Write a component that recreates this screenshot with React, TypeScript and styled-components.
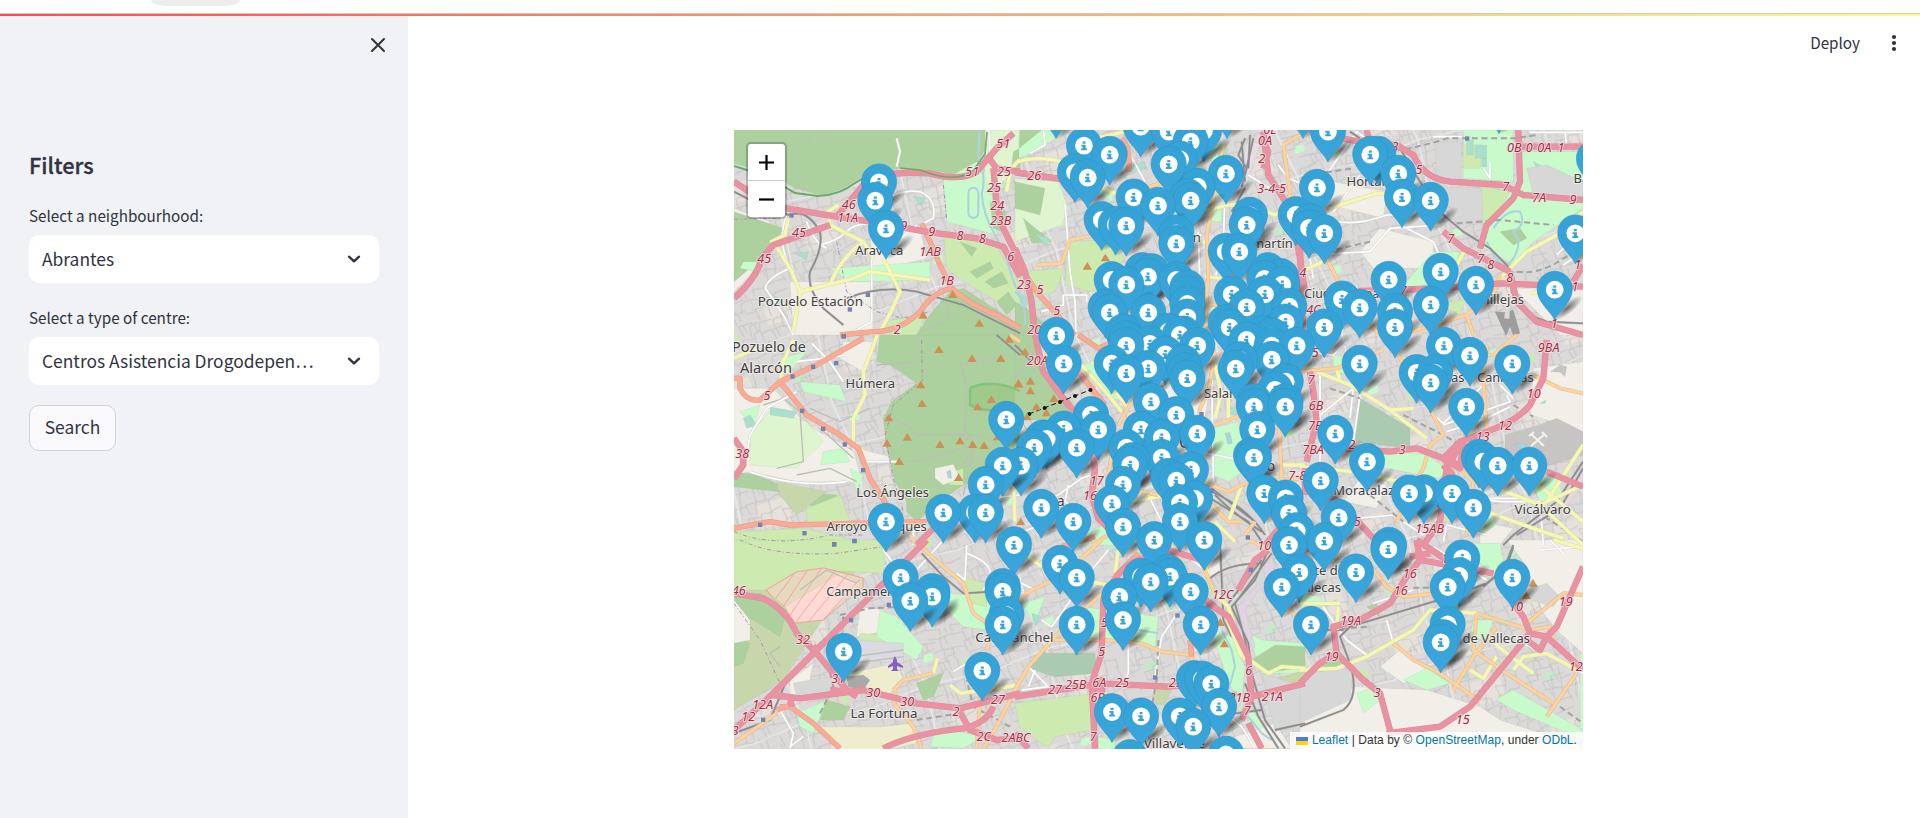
import React from 'react';
import styled, { createGlobalStyle } from 'styled-components';

const GlobalStyle = createGlobalStyle`
  * { box-sizing: border-box; }
  html, body { margin: 0; height: 100%; overflow: hidden; background: #fff; }
  body { font-family: "Noto Sans CJK SC", "Noto Sans", sans-serif; color: #31333f; }
`;

const Page = styled.div`
  height: 818px;
  display: flex;
  flex-direction: column;
`;
const BrowserEdge = styled.div`
  height: 14px;
  flex: none;
  padding-left: 151px;
  border-bottom: 1px solid #c8cacc;
`;
const TabPill = styled.div`
  width: 89px;
  height: 6px;
  background: #ededed;
  border-radius: 0 0 16px 16px / 0 0 6px 6px;
`;
const Decoration = styled.div`
  height: 2px;
  flex: none;
  background: linear-gradient(90deg, #ff4b4b, #fffd80);
`;
const Body = styled.div`
  flex: 1;
  display: flex;
  min-height: 0;
`;
const Sidebar = styled.aside`
  width: 408px;
  flex: none;
  background: #f0f2f6;
  padding: 0 29px;
  display: flex;
  flex-direction: column;
  align-items: flex-start;
`;
const CloseRow = styled.div`
  align-self: stretch;
  display: flex;
  justify-content: flex-end;
  padding: 22px 0 0;
  margin-right: -6px;
  height: 133px;
`;
const Heading = styled.h2`
  margin: 0 0 22px;
  font-size: 21.7px;
  line-height: 32px;
  font-weight: 500;
  -webkit-text-stroke: 0.3px #31333f;
`;
const Label = styled.label`
  font-size: 15.25px;
  line-height: 24px;
  margin-bottom: 8px;
`;
const Select = styled.div`
  width: 350px;
  height: 48px;
  margin-bottom: 22px;
  padding: 0 17px 0 13px;
  border-radius: 10px;
  background: #fff;
  display: flex;
  align-items: center;
  justify-content: space-between;
  font-size: 17.4px;
  line-height: 28px;
`;
const SearchButton = styled.button`
  width: 87px;
  height: 46px;
  margin-top: -2px;
  padding: 0 0 2px;
  border: 1px solid #d0d2d7;
  border-radius: 10px;
  background: #f9f9fb;
  color: #31333f;
  font: 17.4px/28px "Noto Sans CJK SC", "Noto Sans", sans-serif;
`;
const Main = styled.main`
  flex: 1;
  display: flex;
  flex-direction: column;
`;
const Toolbar = styled.header`
  height: 114px;
  padding: 14px 20px 0 0;
  display: flex;
  justify-content: flex-end;
  align-items: flex-start;
  gap: 28px;
  font-size: 15.25px;
  line-height: 24px;
`;
const MapFrame = styled.section`
  position: relative;
  width: 849px;
  height: 619px;
  margin-left: 326px;
  overflow: hidden;
`;
const ZoomControl = styled.div`
  position: absolute;
  left: 12px;
  top: 12px;
  width: 41px;
  border: 2px solid rgba(0, 0, 0, 0.22);
  border-radius: 5px;
  background: #fff;
  background-clip: padding-box;
`;
const ZoomButton = styled.div`
  height: 36px;
  display: flex;
  align-items: center;
  justify-content: center;
  & + & { height: 37px; border-top: 1px solid #ccc; }
`;
const Attribution = styled.div`
  position: absolute;
  right: 0;
  bottom: 0;
  height: 17px;
  padding: 0 6px;
  display: flex;
  align-items: center;
  background: rgba(255, 255, 255, 0.8);
  font: 12px/17px "Liberation Sans", Arial, sans-serif;
  letter-spacing: 0.05px;
  color: #333;
  white-space: pre;
  svg { margin-right: 4px; }
`;
const MapLink = styled.span`
  color: #0078a8;
`;

/* Each tile is described on a grid three times finer than the screen. */
type Tile = {
  x: number;
  y: number;
  areas: [string, string][];
  roads: [RoadKind, string][];
  places?: [number, number, string, number?][];
  exits?: [number, number, string][];
  peaks?: [number, number][];
  stations?: [number, number][];
};
type RoadKind = 'motorway' | 'trunk' | 'primary' | 'secondary' | 'street' | 'rail' | 'path' | 'border' | 'tunnel' | 'water';

const ROADS: Record<RoadKind, { c: string; w: number; edge?: string; dash?: string }> = {
  motorway: { c: '#e892a2', w: 16, edge: '#e08b9b' },
  trunk: { c: '#f9ab95', w: 13, edge: '#e39a84' },
  primary: { c: '#fcd3a0', w: 9, edge: '#e2bb88' },
  secondary: { c: '#f5f7b4', w: 10, edge: '#dcdca6' },
  street: { c: '#ffffff', w: 5, edge: '#d3d2d2' },
  rail: { c: '#8b8b8b', w: 4, edge: '#aeaeae' },
  path: { c: '#bcbfb4', w: 4 },
  border: { c: '#aa91ad', w: 3, dash: '12 7 3 7' },
  tunnel: { c: '#a3a3a3', w: 6, dash: '18 11' },
  water: { c: '#aad3df', w: 6 },
};

const WOOD = '#add19e';
const GRASS = '#cdebb0';
const PARK = '#c8facc';
const LAND = '#f2efe9';
const GREY = '#d8d7d7';
const SCRUB = '#c8d7ab';
const CEMETERY = '#aacbaf';
const PITCH = '#aae0cb';
const ORCHARD = '#dff5d0';

const TILES: Tile[] = [
  {
    x: 730, y: 125,
    areas: [
      [LAND, 'M12 250L120 290 90 420 12 500ZM180 470L420 470 430 630 190 630ZM420 330L570 310 590 400 430 440Z'],
      [WOOD, 'M0 0H770V60L735 130Q700 165 640 140L510 130 400 150Q330 205 270 210L195 190 130 150 60 130 0 110Z'],
      [WOOD, 'M12 260L160 310 130 370 12 470Z'],
      [PARK, 'M640 165L740 110 780 160 800 330 650 290ZM300 430L600 410 600 465 360 470ZM40 410L100 410 80 440 30 430Z'],
      [ORCHARD, 'M765 15L870 15 870 120 780 210 765 160Z'],
      [GRASS, 'M640 320L790 350 870 480 870 570 700 470 650 430Z'],
      [WOOD, 'M690 350L740 370 725 395ZM720 440L780 410 790 430 740 460ZM765 470L815 440 835 475 790 490ZM800 530L835 500 860 540 830 570ZM780 230L830 260 820 320 790 310ZM850 80L870 70V140L845 130Z'],
      [WOOD, 'M870 630H560Q600 560 660 500L700 490 870 600Z'],
      [GRASS, 'M470 590L590 560 560 630H480Z'],
      [PITCH, 'M550 215L590 220 570 240ZM195 385L235 380 230 405ZM130 510L160 530 150 545Z'],
    ],
    roads: [
      ['water', 'M748 15L745 90Q770 160 755 205 760 270 790 320L830 400Q850 480 870 510M715 210Q715 188 730 188T745 210V260Q745 278 730 278T715 260Z'],
      ['street', 'M440 245Q500 190 570 200 620 220 610 280L570 300M265 360Q320 350 350 320T430 300M170 270Q140 350 180 430 110 460 106 490L160 570 190 630M425 400V590L350 630M500 40L510 80 500 125M778 15L780 110M500 350L560 300M230 290Q250 350 290 370'],
      ['path', 'M235 40L240 52M285 22L287 34M570 620L650 590 655 540'],
      ['rail', 'M12 200L130 260 180 270Q230 250 270 320 280 370 240 440 230 490 280 550L340 600M350 520Q450 480 560 500L700 540 870 625'],
      ['border', 'M12 283L150 280M320 350L350 500 440 560 520 580 600 560M640 180L650 280'],
      ['motorway', 'M12 170L80 215 170 250 300 272 420 290 600 322 740 340 820 365 870 455M12 520Q80 460 95 400L130 360 300 300M320 275L400 180Q450 135 600 145 690 170 740 140L800 70 850 25M770 90L800 130 870 140M790 130L800 240 820 310 850 370 870 430'],
      ['trunk', 'M575 295L600 350 630 420 665 490Q610 500 570 560 510 620 430 620L330 630M665 490Q720 540 800 570L870 610'],
      ['secondary', 'M325 240L295 260 300 300 400 350 430 400M460 400L490 460 510 500Q490 550 450 620M210 500L370 460 420 440 600 465M210 500L185 440 150 380 125 350 165 330 175 280M300 480Q330 400 400 350M210 500L190 620M870 105Q840 120 830 200'],
    ],
    places: [[448, 390, 'Aravaca'], [241, 544, 'Pozuelo Estación', 40]],
    exits: [[820, 70, '51'], [727, 154, '51'], [822, 154, '25'], [792, 202, '25'], [802, 254, '24'], [812, 300, '23B'], [356, 253, '46'], [353, 290, '11A'], [207, 336, '45'], [103, 414, '45'], [521, 315, '9'], [605, 332, '9'], [690, 346, '8'], [757, 353, '8'], [600, 393, '1AB'], [842, 407, '6'], [650, 480, '1B'], [502, 626, '2']],
    peaks: [[668, 508], [579, 570], [748, 594]],
    stations: [[184, 271], [413, 509], [359, 553], [341, 634]],
  },
  {
    x: 1015, y: 125,
    areas: [
      [PARK, 'M12 15L160 15 60 80 12 100ZM230 190L300 200 290 230ZM580 255L620 255 620 290 590 290ZM590 15H610V110H590Z'],
      [ORCHARD, 'M0 160L130 170 160 250 140 300 0 350Z'],
      [WOOD, 'M0 170L90 190 75 270 0 250ZM15 15L80 15 12 70ZM25 280L110 350 50 355Z'],
      [GRASS, 'M160 350L260 345 330 400 230 500 150 480ZM12 440L150 430 120 500 40 520Z'],
      [PITCH, 'M60 325L110 345 90 360ZM10 500L40 520 30 560ZM345 120L390 110V130L350 145ZM620 60L635 55V110L620 110Z'],
      ['#eadbe8', 'M700 40L735 60 690 190 660 200Z'],
      [WOOD, 'M0 530Q60 560 120 630H0Z'],
    ],
    roads: [
      ['water', 'M0 500Q35 530 30 600'],
      ['street', 'M45 85L90 60 85 15M150 240L165 440 180 530 183 630M145 510H215V530M145 510V540L80 560M630 200L625 360 600 460M335 70L390 170M700 150L780 200M540 330H560M550 320L555 500M790 120L820 160 870 180'],
      ['rail', 'M690 40L670 90 695 130 680 185M705 30L700 130M680 50L690 170M715 40L690 150M690 190L650 260'],
      ['motorway', 'M0 142L160 165M0 370L30 440 50 530 60 630M745 20L760 150 830 260 855 400 870 500M740 40L760 80 745 130'],
      ['trunk', 'M20 430Q60 500 100 540L180 630M320 40Q350 70 340 140'],
      ['primary', 'M65 420L140 415 165 345 240 330M805 60L870 20M805 60L825 200 820 260M400 185L440 175M625 60L600 200 575 330 580 430 570 630M470 535L620 540'],
      ['secondary', 'M12 110Q70 90 160 115M260 190L300 205M540 265L640 240 700 240 780 270 850 230M560 350L600 360M570 455L620 460M240 40L330 20'],
    ],
    places: [[545, 350, 'n'], [772, 370, 'martín']],
    exits: [[58, 165, '26'], [765, 28, '0E'], [750, 60, '0A'], [740, 113, '2'], [770, 205, '3-4-5'], [27, 493, '23'], [75, 506, '5'], [125, 569, '5'], [58, 627, '20']],
    peaks: [[271, 398], [217, 423]],
  },
  {
    x: 1300, y: 125,
    areas: [
      [LAND, 'M100 170L260 200 250 280 90 240ZM240 310L400 350 400 430 220 430 180 380ZM640 490H849V630H780Z'],
      [PARK, 'M490 15H640L640 170 490 160ZM660 80L849 80 849 250 700 350 640 420 540 360 560 200 640 200ZM400 380L480 380 440 500 310 480Z'],
      [GREY, 'M405 50L485 50 485 170 410 160ZM430 185L550 190 550 290 470 300Z'],
      [GRASS, 'M545 185L630 200 550 330ZM490 60L550 60 540 130 490 130ZM420 540L500 520 480 570Z'],
      [PITCH, 'M500 45L520 45V90H500ZM525 60L560 60V100H525ZM545 100H560V125H545ZM700 110L740 130 720 145ZM740 140L790 160 780 190Z'],
      [WOOD, 'M600 320L660 310 680 340 640 360ZM180 50L240 70 210 90Z'],
      [GREY, 'M680 130L740 120 849 170 849 215 700 210Z'],
      ['#9d9d9d', 'M585 560L615 562 612 580 628 582 630 558 640 555 660 625 640 632 630 605 618 632Z'],
    ],
    roads: [
      ['water', 'M580 310Q620 250 660 260 680 300 640 320 670 350 640 400T570 370L560 350'],
      ['street', 'M400 35L485 35M690 22H849M795 22L800 60M85 140L170 20 210 50M80 280Q150 310 260 270L300 270M20 390L210 380 270 310 420 300M300 300L400 350 430 420M100 260L180 150M550 130L570 160 570 110M770 390L820 340M790 420L849 380M30 400L40 460M440 265L410 260'],
      ['tunnel', 'M230 80Q320 80 440 40L640 40 710 30M470 295L600 285 760 300M650 440Q720 450 790 400L849 370M20 150L160 130M80 380L210 350'],
      ['rail', 'M230 40L300 70 360 170 430 270 490 320 570 370 630 430 635 500 690 570 740 590 849 595M150 20L180 40'],
      ['motorway', 'M100 35L230 60 290 60 340 90Q370 160 450 170L610 180 670 210 849 225M655 15L660 170 640 220 560 300 540 370M665 65H849M430 320L490 370 570 410 630 440M0 370L10 630M100 500L300 495 480 485 600 475 849 485M630 440L650 530 710 590 849 630M200 15L215 80M849 420L820 470'],
      ['primary', 'M80 400L120 480 190 570 240 630M600 450L580 510 500 570 300 630M500 570L520 630'],
      ['secondary', 'M85 250L230 205 300 210M849 260L770 330 680 380 600 460M470 420L500 365M0 440L70 410M690 505L720 500M180 55L300 100'],
    ],
    places: [[228, 182, 'Hortaleza'], [130, 520, 'Ciudad Lineal', 37], [585, 538, 'Canillejas', 39], [868, 175, 'Baraj']],
    exits: [[285, 77, '3'], [357, 148, '5'], [643, 80, '0B'], [688, 80, '0'], [733, 80, '0A'], [783, 80, '1'], [617, 199, '7'], [717, 230, '7A'], [819, 237, '9'], [452, 353, '7'], [542, 415, '7'], [572, 433, '8'], [629, 470, '8'], [833, 433, '1'], [825, 497, '1'], [763, 608, '1'], [40, 567, '4C'], [310, 510, '7'], [8, 456, '4']],
    stations: [[501, 40]],
  },
  {
    x: 730, y: 335,
    areas: [
      [LAND, 'M12 160L130 160 230 270 340 330 370 350 400 450 360 440 200 440 60 410 12 420ZM340 20L440 20 400 110 330 70ZM380 340L500 370 510 385 400 380Z'],
      [WOOD, 'M450 0H870V390L700 450 640 490 560 560 530 530 530 500 495 440 470 340 460 250 485 200 560 145 480 90 440 80Z'],
      [WOOD, 'M12 410L80 420 200 470 320 480 330 560 260 520 150 470 12 455Z'],
      [SCRUB, 'M140 440L290 470 200 540 150 480Z'],
      [PARK, 'M30 230L90 210 70 280ZM210 140L330 150 350 200 220 170ZM360 400L400 420 380 470ZM280 350L340 340 360 380 270 390ZM150 70L230 50 170 120Z'],
      [ORCHARD, 'M60 300L120 225 230 260 280 320 200 400 60 390Z'],
      [GRASS, 'M230 520L330 480 360 560 230 570ZM12 590L220 580 440 630H12ZM640 420L700 400 700 450 660 450Z'],
      ['#9fca8c', 'M720 160Q790 130 870 170V230Q780 240 720 210Z'],
      [PITCH, 'M40 250L60 240 80 270 50 280ZM120 215L200 230 190 250 120 240Z'],
      [LAND, 'M615 400L670 388 690 430 640 450 615 430Z'],
      ['#aad3df', 'M650 410L662 405 665 430 655 430Z'],
    ],
    roads: [
      ['path', 'M460 240L530 270 560 300 730 300 800 320M690 85L710 150 705 280 730 340 690 400M520 380L580 375 730 330M560 80L440 90M800 70L690 90M730 340L700 480M100 210L160 190 210 230 220 380 140 400M240 220L330 260 420 220M270 280L370 370M200 420L300 400 380 440'],
      ['street', 'M245 25L300 80 340 140M12 420L50 360 60 300 110 220 200 170M60 410Q200 460 350 440M350 60L280 70 200 80M550 560V630M690 500L870 480M400 380L500 380'],
      ['rail', 'M800 0L870 60'],
      ['border', 'M560 150L490 210 465 300 490 430 520 530M575 15L577 140M12 590Q130 640 300 600L400 600'],
      ['motorway', 'M12 310L40 350V390L12 430M560 630L630 560 700 510'],
      ['trunk', 'M12 130L30 130 30 160Q50 200 90 195L150 140 260 90 330 50 400 10M150 140L230 240 330 300 385 340 420 430 470 510M12 580L120 560 180 570 590 560M230 240L330 300'],
      ['secondary', 'M442 0L400 110 405 180 370 250 370 330 400 350M150 145L160 80 190 15M850 430L855 560M12 70L80 40'],
      ['primary', 'M540 600L560 630M840 0L870 20'],
    ],
    places: [[117, 52, 'Pozuelo de', 43], [108, 113, 'Alarcón', 44], [421, 160, 'Húmera'], [488, 486, 'Los Ángeles', 39], [440, 589, 'Arroyo Meaques', 39]],
    exits: [[111, 195, '5'], [37, 370, '38']],
    peaks: [[627, 43], [726, 70], [812, 70], [837, 12], [572, 149], [576, 205], [743, 215], [784, 193], [866, 147], [476, 248], [532, 306], [471, 324], [630, 328], [690, 317], [728, 328], [762, 331], [508, 379], [686, 427], [803, 305]],
    stations: [[187, 124], [249, 95], [318, 84], [216, 227], [279, 281], [344, 328], [399, 405], [90, 569], [223, 594], [373, 617], [312, 628], [341, 3]],
  },
  {
    x: 1015, y: 335,
    areas: [
      [WOOD, 'M0 0H60L80 120 170 200 160 260 0 250Z'],
      [PARK, 'M590 280L670 260 700 400 640 440 595 420ZM200 90L250 75 330 200 290 190ZM100 350L60 400H100ZM180 600L270 570 320 630H190Z'],
      [LAND, 'M350 40L600 40 570 250 390 230Z'],
      ['#aad3df', 'M630 295L645 292 652 325 638 328ZM320 400L350 410 330 440Z'],
      [GREY, 'M590 460L740 530 750 590 650 560Z'],
      [PITCH, 'M640 220L670 215V240H645ZM595 120H620V135H595ZM140 580L170 570V600H145Z'],
    ],
    roads: [
      ['path', 'M0 130L60 50M10 250Q60 300 30 340M60 230L160 210'],
      ['street', 'M605 50L590 120 595 440M490 30L530 250M100 500L200 430 230 420M160 450L150 500 200 540M400 480L440 560 470 600M550 350L700 380M30 360L0 380M0 600L100 560'],
      ['rail', 'M0 30L50 80M590 470Q700 520 750 600M600 480Q660 540 740 590M590 460L720 560M570 480L700 560 740 620'],
      ['motorway', 'M60 0L85 110 160 210 215 260 240 400 230 480 250 550 290 590M840 470L810 560 750 630M870 400V480'],
      ['trunk', 'M190 0L250 40 300 20M150 60L270 210'],
      ['primary', 'M600 50L580 170 555 220 540 400 560 440 640 470 700 440 860 430M600 270L680 240M310 270L350 200M280 420L290 360M430 480L380 470M230 630L280 600M790 230L800 430M690 600L720 560M560 480L640 560 680 560'],
      ['secondary', 'M200 90L280 180 320 230M230 80L340 220M350 500L450 480M620 170L600 250M800 390H870M600 560L660 620M680 450L640 560M600 90L620 180M640 180V250'],
    ],
    places: [[666, 189, 'Salamanca', 39], [507, 338, 'C', 48], [768, 408, 'o', 42], [137, 514, 'a', 42]],
    exits: [[67, 90, '20A'], [245, 449, '17'], [225, 495, '16'], [847, 434, '7-8'], [748, 644, '10']],
    peaks: [[10, 144], [46, 138], [46, 167], [64, 215], [94, 233], [117, 190], [36, 245], [30, 50], [17, 560]],
    stations: [[698, 607], [590, 467], [559, 237]],
  },
  {
    x: 1300, y: 335,
    areas: [
      [LAND, 'M700 100L849 80V330L800 330 760 260 690 240ZM180 430L260 450 230 520 130 500ZM540 560L640 580 600 630 540 630Z'],
      [CEMETERY, 'M180 190L330 280 330 340 160 320Z'],
      ['#c6c5c4', 'M615 300L720 270 770 250 849 290V360L720 400 615 360Z'],
      [PARK, 'M150 330L380 360 440 400 420 430 150 380ZM690 430L770 420 790 490 720 500ZM100 60L160 70 160 120 100 110ZM540 480L590 570 540 600Z'],
      [GREY, 'M320 15L440 60V110L320 120ZM560 10L640 10 600 50Z'],
      ['#e5d6e0', 'M790 490L849 390V450L780 540Z'],
      ['#aad3df', 'M640 330L680 325 670 345ZM720 205L738 195 735 205Z'],
      ['#c6c5c4', 'M752 110L780 90 800 95 795 125 780 112Z'],
    ],
    roads: [
      ['street', 'M60 240L160 160 150 250M180 180L160 320M0 50L100 60 140 20M430 270L630 200 620 180M440 290L560 250 630 215M390 230L430 265 550 150M400 490L680 490 740 510M530 490L600 500 720 500 730 630M170 550L280 540 370 600M430 620L440 570 560 600M640 190L600 150M60 100L60 380'],
      ['tunnel', 'M310 240L430 300 500 340M210 480L310 560M710 530L849 620M90 160L180 190M640 210L700 245'],
      ['rail', 'M849 380L770 500 640 600 610 630M849 400L780 520 650 600'],
      ['motorway', 'M740 15L730 130 690 210Q650 260 560 290L480 320 430 370 350 340 270 350 120 340M30 110L40 170 50 260 20 380M480 330L440 400 420 560 370 630M740 410L849 455M0 420L130 510 220 610M440 370L490 400M430 390L520 500M430 370L490 325 480 400Z'],
      ['trunk', 'M430 370L490 330M430 370L460 420'],
      ['primary', 'M0 110L110 100 250 45M280 30L330 130 390 220 430 300 390 330 370 400 340 450 290 560M560 30L550 130 560 290M700 120L780 160 849 175M650 0L580 60 430 60M480 400L520 440 500 600'],
      ['secondary', 'M50 110L150 150 270 225 380 310M270 225L340 220M0 395L160 410 300 440M490 410L590 460 720 510 849 630M620 370L849 560M849 330L740 500M720 510L849 450M560 530L700 580 790 610M110 100L120 140'],
    ],
    places: [[463, 142, 'Las'], [616, 142, 'Canillejas', 38], [191, 481, 'Moratalaz'], [728, 537, 'Vicálvaro', 40]],
    exits: [[46, 67, '5'], [34, 146, '7'], [48, 226, '6B'], [46, 284, '7B'], [39, 357, '7BA'], [155, 342, '2'], [307, 356, '3'], [746, 51, '9BA'], [701, 189, '10'], [615, 285, '12'], [548, 318, '13'], [389, 595, '15AB'], [172, 573, '5']],
    stations: [[414, 510]],
  },
  {
    x: 730, y: 540,
    areas: [
      [SCRUB, 'M12 0H460L400 60 270 250 160 420 12 510Z'],
      [GRASS, 'M12 0H470L460 100 270 90 110 150 12 150Z'],
      [WOOD, 'M12 170L90 160 170 210 150 290 70 240 12 220ZM12 290L60 310 40 370 12 380ZM290 480L360 500 340 540 270 540ZM560 430L640 400 610 470 580 480Z'],
      [LAND, 'M12 180L60 240 60 300 12 310ZM390 200L460 210 480 270 380 290ZM180 420L250 370 230 460 180 470Z'],
      ['#e6d9c0', 'M107 150L200 95 280 83 400 115 400 140 340 180 280 240 195 250 165 200Z'],
      ['#ffd9d4', 'M165 200L330 100 390 130 340 180 280 240 195 250Z'],
      ['#eeedce', 'M350 400L500 370 520 420 480 460 400 450ZM260 560L450 560 550 550 560 610 470 630H330Z'],
      [GRASS, 'M390 280L520 290 530 330 380 330Z'],
      [PARK, 'M450 210L500 230 580 320 560 360 440 290ZM660 160L800 170 770 270 700 260 650 210ZM200 520L290 480 250 580 210 560ZM620 560L760 590 700 625 600 620Z'],
      [GRASS, 'M690 110L770 130 770 200 720 190Z'],
      ['#dadae0', 'M385 300L520 310 520 370 370 360Z'],
      [GREY, 'M190 430L350 400 340 460 200 470Z'],
      ['#aaa9aa', 'M350 410L400 405 420 420 400 450 355 440Z'],
    ],
    roads: [
      ['path', 'M210 150L290 90 380 130M300 320L330 310 340 260M150 320L120 340 150 380M370 350L520 330M370 370L520 350'],
      ['street', 'M710 15L705 120 680 100M710 40Q790 70 780 110L760 150M460 30L490 70 560 140M150 510L190 580 180 625M180 620L220 590M670 395L710 370 750 360M640 0L560 90'],
      ['tunnel', 'M330 225L420 205 520 200M270 520L310 440 300 400M560 540L690 520M840 560L730 500 710 420'],
      ['rail', 'M575 40L640 110 700 160 870 150M12 580L120 540 170 420 270 310 340 260V230'],
      ['border', 'M30 0Q130 50 320 40L460 20M12 190L90 300 150 430'],
      ['motorway', 'M12 160L100 175Q170 210 200 280L260 340 350 450 380 470M12 570L130 460 320 270 480 110 590 0M130 465L210 475 400 450 560 490 690 505 870 460M350 455L300 450M680 500L720 570 800 600 870 595M460 625Q550 580 700 565 770 550 790 500M180 470L185 500M250 320L265 330'],
      ['trunk', 'M150 500L180 500 250 550 330 625M140 510L180 495'],
      ['primary', 'M12 610L140 520M550 0L640 80 700 130 730 220 800 270M500 450Q480 480 500 500L550 560 575 625M490 450L520 420 610 400M755 410L740 625M870 420L800 560 760 625M870 150L790 260 770 330'],
      ['secondary', 'M610 400L622 355M660 435L690 460 870 435'],
    ],
    places: [[410, 169, 'Campamento', 38], [853, 307, 'Carabanchel', 40], [462, 533, 'La Fortuna', 40]],
    exits: [[26, 164, '46'], [219, 311, '32'], [325, 428, '31'], [430, 472, '30'], [532, 497, '30'], [98, 508, '12A'], [55, 543, '12'], [16, 585, '3'], [678, 529, '2'], [804, 491, '27'], [761, 603, '2C'], [858, 607, '2ABC']],
    stations: [[363, 240], [476, 194], [312, 12], [373, 3], [99, 539]],
  },
  {
    x: 1015, y: 540,
    areas: [
      [PARK, 'M200 200L430 230 420 330 310 300 180 290ZM20 190L90 170 60 250ZM590 270L650 290 690 380 680 480 640 430ZM700 280L740 300 870 310V400L740 400ZM700 500L800 610 760 625 700 560ZM250 630V590L300 600V630Z'],
      [CEMETERY, 'M80 340L240 340 245 400 120 410 40 385Z'],
      [GRASS, 'M0 490L240 460 230 570 120 590 100 625 12 560Z'],
      [WOOD, 'M710 360L780 315 870 320V380L750 400Z'],
      [SCRUB, 'M770 420L870 390V430L820 490 760 460ZM420 440L470 450 450 495 415 490Z'],
      [LAND, 'M530 30L600 20 620 100 570 110ZM660 590L780 550 830 625H650Z'],
      ['#e0d4e3', 'M670 200L770 50 780 80 690 210 720 320 700 340Z'],
      [GREY, 'M740 400L870 440V570L780 570ZM650 100L740 70 750 110 680 190Z'],
      [PITCH, 'M50 220L80 230 60 260ZM440 180L480 190 470 210ZM590 510L620 515V540H600Z'],
    ],
    roads: [
      ['water', 'M620 270L650 330 660 380 640 450M700 530L740 580 770 600M370 270L430 280'],
      ['street', 'M340 310L340 400 320 440M480 230L440 290 420 410M210 120L110 260 80 240M40 380L100 440 20 450M60 390L40 440M630 520L680 560 720 625M280 30L230 90M0 120L60 150M520 50L580 100M300 460L320 480'],
      ['tunnel', 'M430 300L425 420 410 500M400 590L420 625'],
      ['rail', 'M615 0L625 240 650 290M760 30L720 120 650 200 700 310 710 400 750 540 810 625M770 40L660 190 690 300 715 420M740 60L640 190M580 120Q630 70 740 70M780 570L870 550M690 430L730 530 790 625M660 520L740 510'],
      ['motorway', 'M240 625L230 430 260 340 265 180Q310 80 370 60L460 30 560 60M0 470L100 455 250 430 460 440 560 430M580 190L640 230 700 350 710 470 680 540M710 470L870 430M670 150L720 60 760 30M560 170L600 200M40 625L0 580M700 550L740 625M235 425L260 420 262 450 238 450Z'],
      ['trunk', 'M300 110L370 40M525 300L530 350M140 20L240 -10'],
      ['primary', 'M12 180L50 150 140 110 260 0M0 450L40 380 130 280 260 160M120 300L270 300 380 310 440 335 530 345M530 300V370M560 70L600 160M700 0L770 30M460 0L500 60M800 200L870 240'],
      ['secondary', 'M200 120L300 140M600 160L640 200 690 360M690 350L760 400 800 380 870 385M0 20L80 80M300 100L310 30M570 60L580 110M630 220L680 350'],
    ],
    places: [[478, 625, 'Villaverde', 40]],
    exits: [[268, 262, '5'], [260, 349, '5'], [322, 441, '25'], [482, 441, '25'], [253, 441, '6A'], [182, 446, '25B'], [120, 462, '27'], [248, 487, '6B'], [235, 604, '7'], [623, 177, '12C'], [701, 404, '6'], [673, 487, '21B'], [697, 526, '7'], [772, 482, '21A']],
    peaks: [[616, 247], [628, 311]],
    stations: [[707, 89], [487, 226], [420, 412]],
  },
  {
    x: 1300, y: 540,
    areas: [
      [LAND, 'M620 0H849V340L780 280 730 220 680 80ZM0 540L160 440 380 450 540 500 600 540 849 620V627H0ZM240 380L300 330 380 390 310 430Z'],
      [GREY, 'M0 420L110 370 160 400 150 480 0 550ZM680 150L740 130 780 170 760 200 690 180Z'],
      [PARK, 'M310 420L380 385 450 430 380 450ZM590 480L640 510 849 600V570L640 450 600 470ZM170 460L220 440 240 480 190 520ZM520 240L580 240 560 300 510 290ZM0 160L60 170 70 200 0 200ZM490 10L600 10 610 60 580 100 500 40ZM840 340V570H849V340Z'],
      [PITCH, 'M480 410L500 400 500 415ZM200 150L220 140 220 155ZM590 250L620 240 625 260Z'],
      [WOOD, 'M200 200L230 190 240 230ZM70 370L140 360 120 385 60 395Z'],
    ],
    roads: [
      ['street', 'M70 200L110 260 140 300 200 345M260 240L280 310M340 150L220 190M670 310L849 400M750 0L790 40M400 20L560 120M300 80L350 110M720 30L849 20'],
      ['tunnel', 'M780 500L849 550M200 260L90 270M340 143H400'],
      ['rail', 'M640 20L620 80 560 130 450 170 150 260 120 290 150 370Q180 470 130 510L0 560M80 270L130 270M640 15L610 90 550 140'],
      ['motorway', 'M350 0L360 60 320 110 270 190 180 240 100 260 110 340 60 370 0 430M110 340L190 420 240 460 270 570M260 580L420 560 510 500 600 390 690 280 670 230 640 190M849 80L770 260 740 290 850 390M690 280L740 290 720 330 680 300ZM360 60L580 100M350 0L440 60M330 50L390 40'],
      ['primary', 'M280 310L340 360 420 400 540 485M460 450L520 350 590 260M530 220L690 270 750 260 760 310 849 390M530 220L520 330 620 400 760 490M830 400L740 530M680 250L790 160 849 165M220 90L260 140 310 170 420 160M100 0L110 60'],
      ['secondary', 'M0 390L110 385 200 350 340 270 390 210 530 220M560 290L620 340 700 400M510 390L550 415 590 350M640 390L670 350 740 340 830 390M0 190L120 190M115 200L110 270M760 0L849 25'],
    ],
    places: [[42, 105, 'Puente de'], [50, 157, 'Vallecas'], [546, 310, 'Villa de Vallecas', 39]],
    exits: [[329, 115, '16'], [302, 165, '16'], [152, 254, '19A'], [95, 363, '19'], [232, 470, '3'], [488, 552, '15'], [797, 197, '19'], [827, 393, '12'], [648, 214, '10'], [435, 68, '1']],
    peaks: [[699, 129], [679, 166]],
  },
];

const MARKERS: [number, number][] = [
  [879, 182.3], [875.3, 200.7], [886, 228.7], [1056, 108], [1084, 145.7], [1109.7, 154.7], [1075, 172.3], [1087.7, 177.7],
  [1140.7, 126.7], [1168.7, 131.7], [1190.7, 141.7], [1204, 131], [1180, 159.3], [1168.7, 164.3], [1226, 173.7], [1133.7, 197.3],
  [1158, 205.7], [1197.7, 186.7], [1187.3, 197], [1190.7, 200.7], [1101.7, 220], [1115.7, 224.7], [1126.3, 225.7], [1176.3, 233.3],
  [1176.3, 243.7], [1250, 215.5], [1246.7, 225], [1295.7, 215], [1225.7, 251.6], [1239.3, 251.7], [1227, 108], [1111.7, 280],
  [1126.3, 284.7], [1142.3, 271], [1151.7, 272], [1148, 276.7], [1176.3, 280], [1187.3, 288.3], [1187.3, 294.3], [1187.3, 304],
  [1187.3, 317.3], [1105.7, 307.7], [1109.7, 312.7], [1148.3, 312.7], [1123.3, 332.3], [1126, 339], [1231.7, 294.3], [1268, 271], [1264.3, 279],
  [1281, 277], [1282.3, 284.7], [1265, 294.3], [1246.7, 307.3], [1289.3, 306.7], [1285.7, 322.3], [1225.7, 323], [1229.7, 327.3],
  [1246.7, 340], [1271.7, 336], [1262, 334], [1168.3, 331.7], [1183.3, 334.3], [1056.3, 335.7], [1328, 131.7], [1303, 108], [1370.3, 154.7],
  [1378.3, 154.6], [1398.3, 173.7], [1317, 187.7], [1310, 221.7], [1309, 228], [1324.3, 233.3], [1402, 197.3], [1430.7, 200.7],
  [1388.7, 279.7], [1440.7, 271.7], [1476, 284.7], [1342, 299.3], [1359.7, 307.7], [1395, 311.7], [1430.7, 304.7], [1554.7, 289.7],
  [1575.3, 233.3], [1594, 159], [1324.3, 327.3], [1395, 327.3], [1499, 103], [1063.7, 363.7], [1126.3, 345.7], [1150, 344],
  [1111.7, 363.7], [1126.3, 373.3], [1148.3, 368.7], [1165.3, 354.3], [1183.3, 363.3], [1187.3, 378.3], [1185, 371], [1197.3, 345.7],
  [1180, 335], [1235.7, 368.7], [1240, 360], [1271.7, 345.7], [1271.7, 359.7], [1296.7, 345.7], [1285.7, 381.7], [1275, 390],
  [1254, 402], [1254, 406.7], [1285.3, 402], [1285.3, 406.7], [1257.3, 429.7], [1151, 401.7], [1176.3, 415], [1141, 429.7],
  [1161.7, 437.7], [1197.3, 433.7], [1161.7, 457.7], [1126.3, 447.7], [1130.3, 465], [1132.3, 461], [1123, 484.7], [1112, 503.7],
  [1123, 526.7], [1091, 415], [1098.3, 429.7], [1076.7, 447.7], [1063.7, 429.3], [1043, 438.3], [1046.7, 439], [1034.3, 447.7],
  [1021, 465.6], [1191, 470], [1168.3, 476.7], [1176.3, 480.7], [1195, 499], [1180, 503], [1180, 521.7], [1154.3, 540],
  [1204.3, 540], [1041.3, 507.7], [1073.3, 521.7], [1014, 545], [1251, 456], [1254, 457.7], [1264.3, 493.3], [1285.7, 498.3],
  [1289, 513.3], [1296.7, 531], [1289, 545], [1359.7, 363.7], [1444, 345.7], [1470, 355.7], [1512.3, 363.7], [1416.7, 372.9],
  [1435, 373], [1430.7, 382.7], [1466.3, 406.7], [1335.3, 433.7], [1367, 461.7], [1320.7, 480.7], [1479, 457.7], [1483.3, 461.7],
  [1497.7, 465.7], [1529.3, 465.7], [1424, 493.2], [1409, 493.3], [1452, 493.3], [1473.3, 507.7], [1338.7, 517.7], [1324.3, 541],
  [1389, 545.7], [1388.3, 549.3], [1462.3, 558.3], [1006.3, 419.7], [1002.7, 465.7], [985.7, 484.7], [943.3, 512.7], [975, 512.6],
  [985.7, 512.7], [886, 521.7], [900.7, 577.7], [910.3, 601], [932.3, 596.7], [932.3, 592], [1002.7, 587], [1002.7, 591.7],
  [1006.5, 615], [1002.7, 624.7], [843.7, 651.7], [982.3, 670.7], [1060, 563.7], [1076.7, 577.7], [1119.3, 596.7], [1123, 620],
  [1076.7, 624.7], [1150.7, 581.7], [1141, 576.7], [1170, 576.7], [1168, 573], [1190.7, 591.7], [1200.7, 624.7], [1299.3, 572.3],
  [1281.7, 587], [1194, 679], [1202, 679.3], [1211.3, 684], [1219, 706.7], [1112, 712], [1141, 716.3], [1179.7, 716.3],
  [1193.3, 726.7], [1130, 758], [1226, 754.5], [1356, 572.3], [1459.3, 576], [1447.7, 587], [1512.3, 577.7], [1311, 624.7],
  [1447.7, 624.5], [1443, 638], [1440.7, 642.3],
];
const SORTED = [...MARKERS].sort((a, b) => a[1] - b[1]);

/* Irregular residential street grid, repeated under everything else. */
const streetLines = (() => {
  let seed = 11;
  const rnd = () => ((seed = (seed * 16807) % 2147483647) / 2147483647);
  let d = '';
  for (let i = 0; i < 11; i++)
    for (let j = 0; j < 11; j++) {
      const x = i * 11.5 + rnd() * 5;
      const y = j * 11.5 + rnd() * 5;
      if (rnd() > 0.2) d += `M${x.toFixed(1)} ${y.toFixed(1)}l${(10 + rnd() * 5).toFixed(1)} ${(rnd() * 6 - 3).toFixed(1)}`;
      if (rnd() > 0.2) d += `M${x.toFixed(1)} ${y.toFixed(1)}l${(rnd() * 6 - 3).toFixed(1)} ${(10 + rnd() * 5).toFixed(1)}`;
      if (rnd() > 0.7) d += `M${(x + 5).toFixed(1)} ${y.toFixed(1)}l1 8`;
    }
  return d;
})();

const tileTransform = (t: Tile) => `translate(${t.x} ${t.y}) scale(${1 / 3})`;

const CityMap = () => (
  <svg width="849" height="619" viewBox="734 130 849 619" style={{ display: 'block' }}>
    <defs>
      <pattern id="streets" width="126" height="126" patternUnits="userSpaceOnUse" patternTransform="rotate(-17)">
        <rect width="126" height="126" fill="#dbdad9" />
        <rect x="10" y="12" width="28" height="20" fill="#e6e2db" />
        <rect x="70" y="75" width="32" height="24" fill="#e6e2db" />
        <rect x="60" y="15" width="10" height="7" fill="#c8facc" />
        <rect x="18" y="88" width="12" height="7" fill="#c3eac9" />
        <rect x="96" y="30" width="7" height="9" fill="#cdebb0" />
        <path d={streetLines} stroke="#c3c2c2" strokeWidth="0.8" fill="none" />
        <path d="M0 50L55 44 126 50M48 0L55 44 48 126" stroke="#efeeee" strokeWidth="1.2" fill="none" />
      </pattern>
      <radialGradient id="shade">
        <stop offset="0" stopColor="#222" stopOpacity="0.65" />
        <stop offset="0.6" stopColor="#333" stopOpacity="0.3" />
        <stop offset="1" stopColor="#333" stopOpacity="0" />
      </radialGradient>
      <linearGradient id="pinFill" x1="0" y1="0" x2="0" y2="1">
        <stop offset="0" stopColor="#35a2d5" />
        <stop offset="1" stopColor="#3aa6dc" />
      </linearGradient>
      <g id="pin">
        <ellipse cx="12.5" cy="18.5" rx="19" ry="6" transform="rotate(-38 12.5 18.5)" fill="url(#shade)" />
        <path d="M0 30.5C-4 21-17.6 13-17.6-.6A17.6 17.8 0 0 1 17.6-.6C17.6 13 4 21 0 30.5Z" fill="url(#pinFill)" stroke="#2f93c6" strokeWidth="0.6" />
        <circle r="8.9" fill="#fff" />
        <path d="M-1.4-4.3H1.5V-2H-1.4ZM-2.7-1H1.6V2.8H2.9V4.6H-2.9V2.8H-1.4V.8H-2.7Z" fill="#38a3d8" />
      </g>
    </defs>
    <rect x="734" y="130" width="849" height="619" fill="url(#streets)" />
    {TILES.map((t, i) => (
      <g key={i} transform={tileTransform(t)}>
        {t.areas.map(([fill, d], j) => (
          <path key={j} d={d} fill={fill} stroke="#8aa97c" strokeOpacity="0.2" strokeWidth="2" />
        ))}
      </g>
    ))}
    <g stroke="#f39a91" strokeWidth="0.8" fill="none">
      <path d="M766 590L796 572 824 568 863 578 863 587 823 620 795 623Z" />
      <path d="M776 598L794 574M783 607L807 571M789 617L821 569M796 622L835 571M809 621L847 575M824 619L860 579" />
    </g>
    {(['path', 'water', 'street', 'border', 'tunnel', 'rail', 'secondary', 'primary', 'trunk', 'motorway'] as RoadKind[]).map((kind) => {
      const style = ROADS[kind];
      const passes = style.edge ? [true, false] : [false];
      return passes.map((casing) => (
        <g key={kind + casing} fill="none" strokeLinecap="butt" strokeLinejoin="round"
          stroke={casing ? style.edge : style.c} strokeWidth={casing ? style.w + 3 : style.w} strokeDasharray={style.dash}>
          {TILES.map((t, i) => (
            <g key={i} transform={tileTransform(t)}>
              {t.roads.filter((r) => r[0] === kind).map((r, j) => <path key={j} d={r[1]} />)}
            </g>
          ))}
        </g>
      ));
    })}
    <path d="M734 166L750 171 773 180 795 193 818 196Q840 195 855 183L870 174" fill="none" stroke="#6aab66" strokeWidth="2" />
    <path d="M900 168L920 170Q955 184 973 171L985 154 987 132" fill="none" stroke="#6aab66" strokeWidth="1.6" />
    <path d="M970 388Q992 378 1020 391M970 388V405Q990 414 1008 408" fill="none" stroke="#84c47c" strokeWidth="2.5" />
    <path d="M1029 414L1090 390" stroke="#111" strokeDasharray="5 3" />
    {[[1029.3, 414], [1044.7, 408], [1060, 402], [1075, 396], [1090.5, 390]].map(([x, y]) => (
      <circle key={x} cx={x} cy={y} r="2" fill="#111" />
    ))}
    <path d="M1531 434L1544 446M1545 434L1531 446M1529 436L1534 432M1542 432L1547 437" stroke="#f4f2ef" strokeWidth="2" />
    <path d="M895 656L897 660V662L903 666V668L897 666V669L899 671H891L893 669V666L888 668V666L893 662V660Z" fill="#8461c4" />
    {TILES.map((t, i) => (
      <g key={i} transform={tileTransform(t)} textAnchor="middle" fontFamily='"Noto Sans", sans-serif'>
        {t.stations?.map(([x, y], j) => <rect key={j} x={x - 6} y={y - 6} width="13" height="13" fill="#7981b0" />)}
        {t.peaks?.map(([x, y], j) => <path key={j} d={`M${x} ${y - 12}l14 23h-28z`} fill="#d08f55" />)}
        <g fontStyle="italic" fontSize="38" fill="#a82a40" stroke="#f3e3e5" strokeWidth="5" paintOrder="stroke" strokeLinejoin="round">
          {t.exits?.map(([x, y, s], j) => <text key={j} x={x} y={y}>{s}</text>)}
        </g>
        <g fill="#404040" stroke="#f4f2ef" strokeOpacity="0.8" strokeWidth="6" paintOrder="stroke" strokeLinejoin="round">
          {t.places?.map(([x, y, s, size], j) => <text key={j} x={x} y={y} fontSize={size ?? 39}>{s}</text>)}
        </g>
      </g>
    ))}
    {SORTED.map(([x, y], i) => <use key={i} href="#pin" x={x} y={y} />)}
  </svg>
);

const Chevron = () => (
  <svg width="16" height="16" viewBox="0 0 16 16" fill="none" stroke="#31333f" strokeWidth="2.4" strokeLinecap="round" strokeLinejoin="round">
    <path d="M3 5.7L8 10.3 13 5.7" />
  </svg>
);

export default function App() {
  return (
    <Page>
      <GlobalStyle />
      <BrowserEdge><TabPill /></BrowserEdge>
      <Decoration />
      <Body>
        <Sidebar>
          <CloseRow>
            <svg width="14" height="14" viewBox="0 0 14 14" stroke="#31333f" strokeWidth="2" strokeLinecap="round">
              <path d="M1 1L13 13M13 1L1 13" />
            </svg>
          </CloseRow>
          <Heading>Filters</Heading>
          <Label>Select a neighbourhood:</Label>
          <Select><span>Abrantes</span><Chevron /></Select>
          <Label>Select a type of centre:</Label>
          <Select><span>Centros Asistencia Drogodepen…</span><Chevron /></Select>
          <SearchButton>Search</SearchButton>
        </Sidebar>
        <Main>
          <Toolbar>
            <span>Deploy</span>
            <svg width="12" height="26" viewBox="0 0 12 26" fill="#31333f">
              <circle cx="6" cy="7" r="2.1" /><circle cx="6" cy="13" r="2.1" /><circle cx="6" cy="19" r="2.1" />
            </svg>
          </Toolbar>
          <MapFrame>
            <CityMap />
            <ZoomControl>
              <ZoomButton>
                <svg width="15" height="15" stroke="#000" strokeWidth="2.2"><path d="M0 7.5H15M7.5 0V15" /></svg>
              </ZoomButton>
              <ZoomButton>
                <svg width="15" height="15" stroke="#000" strokeWidth="2.2"><path d="M0 7.5H15" /></svg>
              </ZoomButton>
            </ZoomControl>
            <Attribution>
              <svg width="12" height="8"><rect width="12" height="4" fill="#4c7be1" /><rect y="4" width="12" height="4" fill="#ffd500" /></svg>
              <MapLink>Leaflet</MapLink> | Data by © <MapLink>OpenStreetMap</MapLink>, under <MapLink>ODbL</MapLink>.
            </Attribution>
          </MapFrame>
        </Main>
      </Body>
    </Page>
  );
}
